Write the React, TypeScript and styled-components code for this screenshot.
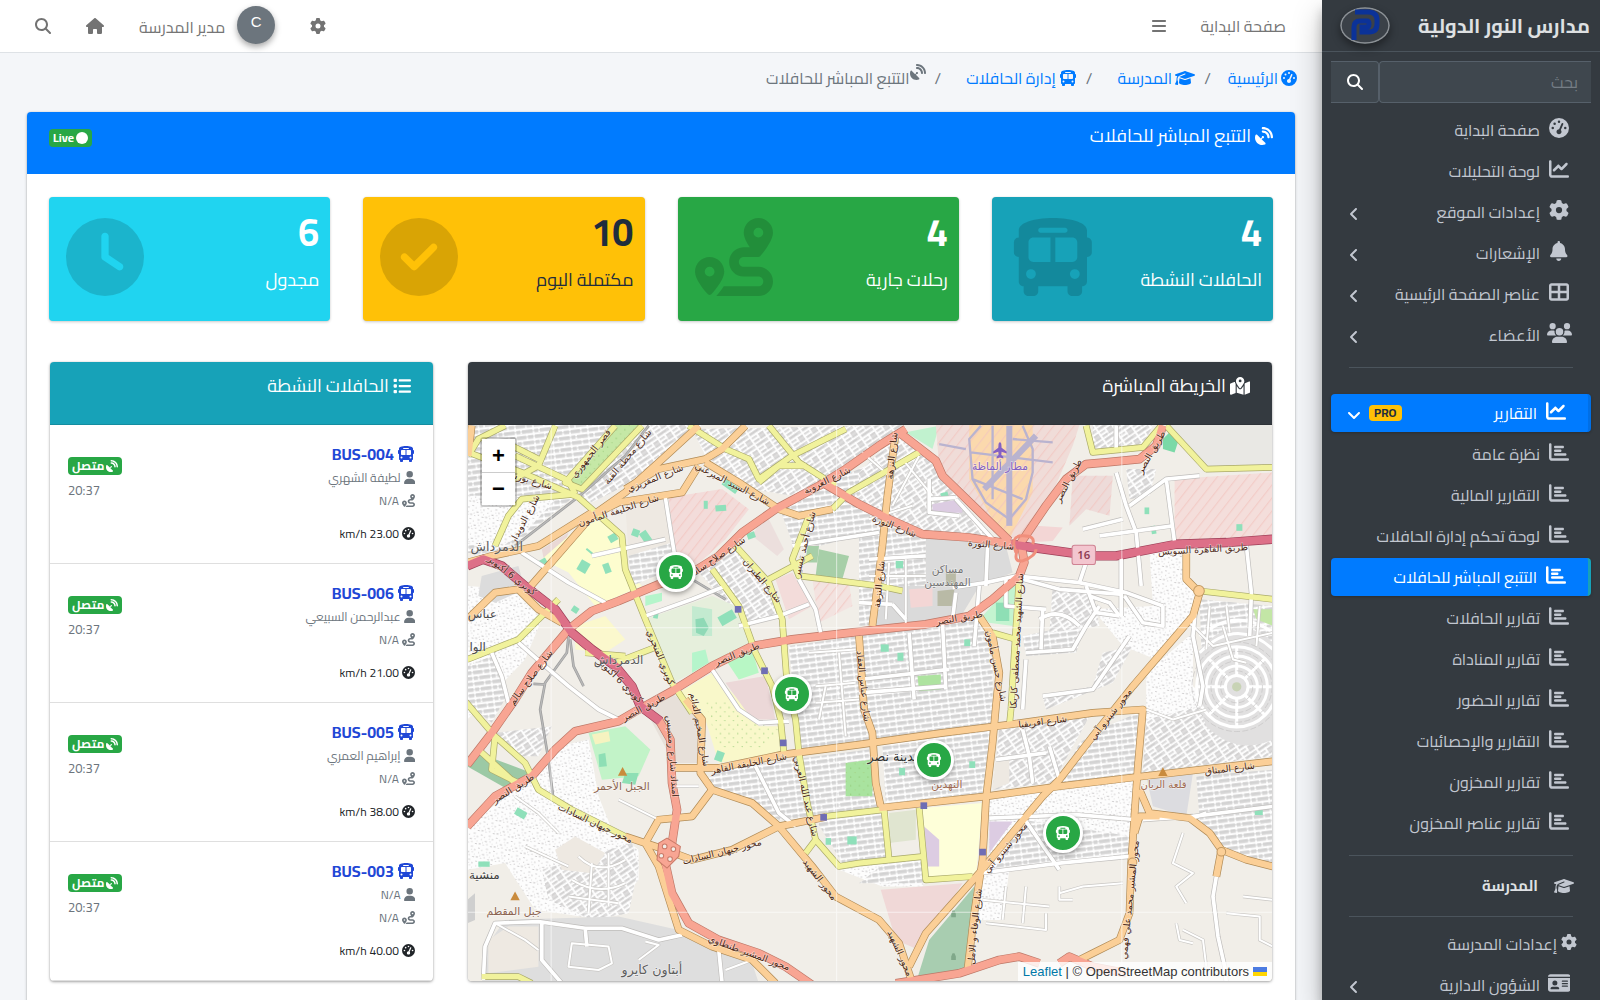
import React from "react";
import styled, { createGlobalStyle, css } from "styled-components";
import {
  FaAngleDown,
  FaAngleLeft,
  FaBars,
  FaBell,
  FaBus,
  FaChartBar,
  FaChartLine,
  FaCircle,
  FaCircleCheck,
  FaClock,
  FaGaugeHigh,
  FaGear,
  FaGraduationCap,
  FaHouse,
  FaIdCard,
  FaList,
  FaMagnifyingGlass,
  FaMapLocationDot,
  FaRoute,
  FaSatelliteDish,
  FaTableCellsLarge,
  FaUser,
  FaUsers,
} from "react-icons/fa6";

const colors = {
  primary: "#007bff",
  info: "#17a2b8",
  success: "#28a745",
  warning: "#ffc107",
  cyan: "#20d4f0",
  dark: "#343a40",
  muted: "#6c757d",
  sidebarText: "#c2c7d0",
};

const GlobalStyle = createGlobalStyle`
  *, *::before, *::after { box-sizing: border-box; }
  body {
    margin: 0;
    background: #f4f6f9;
    color: #212529;
    font-family: Cairo, "Open Sans", "DejaVu Sans", sans-serif;
    font-size: 16px;
    line-height: 24px;
  }
  a { color: inherit; text-decoration: none; }
  svg { flex-shrink: 0; }
  svg[viewBox="0 0 448 512"] { width: 0.875em; }
  svg[viewBox="0 0 576 512"] { width: 1.125em; }
  svg[viewBox="0 0 640 512"] { width: 1.25em; }
`;

const Shell = styled.div`
  display: flex;
  height: 100vh;
  overflow: hidden;
`;

/* ---------- Sidebar ---------- */

const Sidebar = styled.aside`
  flex: 0 0 278px;
  z-index: 2;
  overflow: hidden;
  background: ${colors.dark};
  color: ${colors.sidebarText};
  box-shadow: 0 14px 28px rgba(0, 0, 0, 0.25), 0 10px 10px rgba(0, 0, 0, 0.22);
`;

const Brand = styled.a`
  display: flex;
  align-items: center;
  justify-content: space-between;
  height: 52px;
  padding: 0 10px 0 18px;
  border-bottom: 1px solid #4b545c;
  color: #dee0e2;
  font-size: 20px;
  font-weight: 700;
`;

const BrandLogo = styled.svg`
  width: 50px;
  height: 37px;
  border-radius: 50%;
  box-shadow: 0 4px 8px rgba(0, 0, 0, 0.4);
`;

const SideSearch = styled.form`
  display: flex;
  height: 42px;
  margin: 9px 9px 8px;
`;

const SideInput = styled.input`
  flex: 1;
  min-width: 0;
  padding: 0 13px;
  border: 1px solid #56606a;
  border-right: 0;
  border-radius: 4px 0 0 4px;
  background: #3f474e;
  color: #fff;
  font: inherit;
  &::placeholder { color: #757d85; opacity: 1; }
`;

const SideSearchButton = styled.button`
  display: grid;
  place-items: center;
  width: 48px;
  border: 1px solid #56606a;
  border-left: 0;
  border-radius: 0 4px 4px 0;
  background: #3f474e;
  color: #fff;
  font-size: 16px;
`;

const NavList = styled.ul`
  display: grid;
  gap: 3px;
  margin: 0;
  padding: 0 9px;
  list-style: none;
`;

const NavLink = styled.a<{ $state?: "parent" | "current"; $tight?: boolean }>`
  display: flex;
  align-items: center;
  gap: ${(p) => (p.$tight ? 2 : 9)}px;
  height: 38px;
  padding: 0 ${(p) => (p.$tight ? 12 : 22)}px 0 17px;
  border-radius: 4px;
  white-space: nowrap;
  ${(p) =>
    p.$state &&
    css`
      background: ${colors.primary};
      border-right: 3px solid ${p.$state === "current" ? colors.info : "#006fe6"};
      color: #fff;
      box-shadow: 0 1px 3px rgba(0, 0, 0, 0.24);
    `}
`;

const NavIcon = styled.span<{ $size?: number }>`
  display: flex;
  justify-content: center;
  width: 20px;
  margin-bottom: 4px;
  font-size: ${(p) => p.$size ?? 20}px;
`;

const NavText = styled.span`
  flex: 1;
`;

const ProBadge = styled.span`
  padding: 0 5px;
  border-radius: 4px;
  background: ${colors.warning};
  color: #1f2d3d;
  font-size: 12px;
  font-weight: 700;
  line-height: 16px;
`;

const Chevron = styled.span`
  display: flex;
  justify-content: center;
  width: 12px;
  padding-top: 3px;
  font-size: 16px;
`;

const Divider = styled.hr<{ $above?: number; $below?: number }>`
  margin: ${(p) => p.$above ?? 13}px 27px ${(p) => p.$below ?? 0}px;
  border: 0;
  border-top: 1px solid #4b545c;
`;

const SideHeading = styled.div`
  display: flex;
  align-items: center;
  gap: 16px;
  height: 60px;
  padding: 0 26px;
  color: #dfe1e4;
  font-size: 15px;
  font-weight: 700;
  svg { color: ${colors.sidebarText}; font-size: 16px; }
`;

/* ---------- Top bar ---------- */

const Main = styled.main`
  flex: 1;
  min-width: 0;
  overflow-y: auto;
  scrollbar-width: none;
`;

const TopBar = styled.header`
  display: flex;
  align-items: center;
  height: 53px;
  padding: 0 36px 0 35px;
  border-bottom: 1px solid #dee2e6;
  background: #fff;
  color: #757575;
`;

const IconButton = styled.button`
  display: grid;
  place-items: center;
  padding: 0;
  border: 0;
  background: none;
  color: #737373;
  font-size: 16px;
`;

const TopStart = styled.div`
  display: flex;
  align-items: center;
  gap: 34px;
  flex: 1;
`;

const TopEnd = styled.div`
  display: flex;
  align-items: center;
  gap: 35px;
`;

const Profile = styled.a`
  display: flex;
  align-items: center;
  gap: 12px;
  padding-top: 2px;
`;

const Avatar = styled.span`
  width: 38px;
  height: 38px;
  margin-bottom: 4px;
  border-radius: 50%;
  background: ${colors.muted};
  box-shadow: 0 3px 6px rgba(0, 0, 0, 0.35);
  color: #fff;
  font-family: "Liberation Sans", Arial, sans-serif;
  font-size: 15px;
  line-height: 32px;
  text-align: center;
`;

/* ---------- Breadcrumb ---------- */

const Crumbs = styled.ol`
  display: flex;
  align-items: center;
  height: 24px;
  margin: 13px 25px 22px;
  padding: 0;
  color: ${colors.muted};
  list-style: none;
`;

const Crumb = styled.li`
  display: flex;
  align-items: center;
  white-space: nowrap;
  & + &::before {
    content: "/";
    padding: 0 25px 0 9px;
  }
  &:nth-child(2)::before {
    padding-right: 17px;
  }
`;

const CrumbLink = styled.a`
  display: flex;
  align-items: center;
  gap: 3px;
  color: ${colors.primary};
`;

const CrumbCurrent = styled.span`
  display: flex;
  align-items: center;
  svg { margin-bottom: 12px; }
`;

/* ---------- Cards ---------- */

const Panel = styled.section`
  margin: 0 27px;
  border-radius: 4px;
  background: #fff;
  box-shadow: 0 0 1px rgba(0, 0, 0, 0.2), 0 1px 3px rgba(0, 0, 0, 0.3);
`;

const PanelHeader = styled.header`
  display: flex;
  align-items: flex-start;
  justify-content: space-between;
  height: 62px;
  padding: 12px 22px;
  border-radius: 4px 4px 0 0;
  background: ${colors.primary};
  color: #fff;
`;

const Title = styled.h2`
  display: flex;
  align-items: center;
  gap: 4px;
  margin: 0;
  font-size: 18px;
  font-weight: 400;
  line-height: 24px;
`;

const GreenBadge = styled.span`
  display: inline-flex;
  align-items: center;
  gap: 2px;
  padding: 0 4px;
  border-radius: 4px;
  background: ${colors.success};
  color: #fff;
  font-size: 12px;
  font-weight: 700;
  line-height: 18px;
`;

const LiveBadge = styled(GreenBadge)`
  margin-top: 5px;
`;

const PanelBody = styled.div`
  padding: 23px 22px;
`;

const Stats = styled.div`
  display: grid;
  grid-template-columns: repeat(4, minmax(0, 1fr));
  gap: 33px;
  margin-bottom: 41px;
`;

const StatBox = styled.article<{ $bg: string; $fg?: string }>`
  display: flex;
  justify-content: space-between;
  height: 124px;
  padding: 10px 11px 10px 17px;
  border-radius: 4px;
  background: ${(p) => p.$bg};
  color: ${(p) => p.$fg ?? "#fff"};
  box-shadow: 0 0 1px rgba(0, 0, 0, 0.13), 0 1px 3px rgba(0, 0, 0, 0.2);
  > svg {
    margin-top: 11px;
    color: rgba(0, 0, 0, 0.15);
    font-size: 78px;
  }
`;

const StatValue = styled.h3`
  margin: 0 0 11px;
  font-size: 38px;
  font-weight: 700;
  line-height: 50px;
`;

const StatLabel = styled.p`
  margin: 0;
  font-size: 18px;
`;

const Columns = styled.div`
  display: grid;
  grid-template-columns: minmax(0, 21fr) minmax(0, 10fr);
  gap: 35px;
  padding: 0 1px;
`;

const Card = styled.section`
  overflow: hidden;
  border-radius: 4px;
  background: #fff;
  box-shadow: 0 0 1px rgba(0, 0, 0, 0.25), 0 1px 3px rgba(0, 0, 0, 0.35);
`;

const CardHeader = styled.header<{ $bg: string }>`
  height: 63px;
  padding: 12px 22px;
  border-bottom: 1px solid rgba(0, 0, 0, 0.13);
  background: ${(p) => p.$bg};
  color: #fff;
`;

const BusList = styled.ul`
  margin: 0;
  padding: 0;
  list-style: none;
`;

const BusItem = styled.li`
  display: flex;
  justify-content: space-between;
  height: 139px;
  padding: 17px 18px;
  border-bottom: 1px solid #dfdfdf;
`;

const BusName = styled.h4`
  display: flex;
  align-items: center;
  gap: 3px;
  margin: 0;
  color: #1f47d6;
  font-size: 16px;
  font-weight: 700;
  line-height: 24px;
`;

const BusLine = styled.p<{ $dark?: boolean }>`
  display: flex;
  align-items: center;
  gap: 3px;
  margin: 0;
  margin-top: ${(p) => (p.$dark ? 10 : 0)}px;
  color: ${(p) => (p.$dark ? "#212529" : colors.muted)};
  font-size: 12px;
  line-height: 23px;
  svg { font-size: 13px; }
`;

const BusStatus = styled.div`
  display: flex;
  flex-direction: column;
  align-items: flex-end;
  padding-top: 15px;
`;

const BusTime = styled.time`
  margin-top: 3px;
  color: ${colors.muted};
  font-size: 13px;
`;

/* ---------- Map ---------- */

const MapFrame = styled.div`
  position: relative;
  height: 556px;
  background: #f2efe9;
  direction: ltr;
`;

const MapCanvas = styled.svg`
  display: block;
  width: 100%;
  height: 100%;
`;

const ZoomControl = styled.div`
  position: absolute;
  top: 12px;
  left: 12px;
  display: grid;
  border: 2px solid rgba(0, 0, 0, 0.2);
  border-radius: 4px;
  background-clip: padding-box;
`;

const ZoomButton = styled.button`
  width: 33px;
  height: 33px;
  padding: 0;
  border: 0;
  background: #fff;
  color: #000;
  font: bold 22px/32px "Liberation Sans", Arial, sans-serif;
  & + & { border-top: 1px solid #ccc; }
`;

const Attribution = styled.div`
  position: absolute;
  right: 0;
  bottom: 0;
  display: flex;
  align-items: center;
  gap: 4px;
  padding: 0 5px;
  background: rgba(255, 255, 255, 0.8);
  color: #333;
  font: 13px/19px "Liberation Sans", Arial, sans-serif;
  a { color: #0078a8; }
`;

const Flag = styled.svg`
  width: 14px;
  height: 9px;
`;

const Marker = styled.span`
  position: absolute;
  display: grid;
  place-items: center;
  width: 40px;
  height: 40px;
  border: 3px solid #fff;
  border-radius: 50%;
  background: ${colors.success};
  box-shadow: 0 2px 5px rgba(0, 0, 0, 0.35);
  color: #fff;
  font-size: 14px;
  transform: translate(-50%, -50%);
`;

type RoadKind = "motorway" | "primary" | "secondary" | "tertiary" | "street" | "lane" | "rail";

const roadStyle: Record<RoadKind, [string, string, number]> = {
  motorway: ["#9c3f57", "#dd7088", 24],
  primary: ["#bd7767", "#f8a593", 22],
  secondary: ["#b08b57", "#fbcf97", 19],
  tertiary: ["#a9a96a", "#f1f29c", 16],
  street: ["#bfbdbb", "#ffffff", 11],
  lane: ["#c9c7c4", "#ffffff", 6],
  rail: ["#9b9b9b", "#b9b9b9", 4],
};

const roads: [RoadKind, string][] = [
  ["rail", "M330 650L325 700L260 790L245 870L270 1020L285 1140"],
  ["rail", "M335 660L345 740L375 800M225 793L260 795M700 480L800 540"],
  ["rail", "M570 20L500 110L370 225L170 380"],
  ["street", "M620 235L635 330L650 420M190 400L330 490L440 550M840 620L960 590L1050 555M1020 480L1070 570L1085 640"],
  ["street", "M560 590L700 540L800 500M400 410L620 360M1000 380L1260 340M760 750L840 870L900 910L990 905"],
  ["street", "M180 670L260 740L330 800L420 870L480 900M100 700L130 770L150 850"],
  ["street", "M1200 550L1300 555M1300 555L1340 600M1230 420L1400 410M1480 505L1580 490L1670 470L1860 490L2000 520L2110 560"],
  ["street", "M1690 480L1800 510L1990 525M1970 160L2000 260L2030 340L2045 500M1860 490L1880 430M2120 180L2145 370M2010 260L2120 180L2220 170"],
  ["street", "M1920 350L2140 320M1415 240L1490 235M1410 180L1410 280L1500 290M1490 240L1600 360M1585 380L1580 500M1490 520L1480 600"],
  ["street", "M1985 400L1985 540L1985 590M1995 530L2050 610L2110 620L2110 560M1880 500L1910 580L1980 590"],
  ["street", "M1200 780L1470 750M1200 820L1460 800M1350 640L1365 840M1450 610L1460 810M1640 480L1640 560L1760 570"],
  ["street", "M1700 700L1840 690L1880 620L1920 560M1700 720L1690 870M1750 830L1900 810L2010 650"],
  ["street", "M2210 540L2200 650L2230 800L2220 860M2360 380L2375 520L2370 650"],
  ["street", "M1560 1360L1800 1330L2010 1310M1590 1195L1850 1185L2030 1200M1690 1190L1800 1350"],
  ["street", "M2270 1370L2260 1430L2275 1550L2295 1640L2300 1690M2050 1200L2200 1190L2440 1160M2200 1195L2240 1180"],
  ["street", "M75 1680L80 1580L110 1510L240 1505L380 1525L490 1525L600 1560L670 1545M250 1505L250 1620L310 1690M380 1525L385 1580M780 1590L790 1690"],
  ["street", "M890 1040L960 1180L1010 1220M1610 1020L1760 1000M1770 980L1800 1080M1690 930L1710 1010L1720 1090"],
  ["street", "M1750 570L1745 690M1560 500L1545 680M1740 600Q1800 560 1860 620M1890 530L1950 550L1980 590M1970 20L1970 90M1990 300L1870 330"],
  ["lane", "M480 1140L600 1200M640 1100L720 1100M1070 800L1190 790M1100 800L1080 900M1050 700L1190 690M1070 850L1200 840M1140 700L1160 950"],
  ["lane", "M2290 620L2320 720L2360 730M2180 600L2260 680L2440 640M2060 870L2140 900L2240 870M2250 560L2240 690M2300 560L2310 640M2400 560L2390 680"],
  ["lane", "M2170 1240L2140 1330L2200 1360L2150 1400L2180 1450M2350 1430L2440 1440M2300 1480L2400 1490L2400 1560L2440 1580M2170 1530L2230 1560L2240 1640M2150 1510L2160 1560L2200 1570"],
  ["lane", "M1580 1510L1760 1530L1760 1480M1570 1440L1770 1460M1800 1420L1870 1400L1990 1390M1800 1400L1800 1440L1840 1440M1640 1400L1630 1500M1700 1400L1690 1510"],
  ["lane", "M340 1570L450 1580L460 1630L420 1650L330 1640ZM540 1620L600 1575L560 1565M800 1650L880 1620L940 1690M110 1510L200 1560L240 1590"],
  ["lane", "M360 1310Q420 1370 500 1320M340 1380Q420 1430 500 1390M330 1430L480 1450M400 1330L390 1480M450 1300L450 1460M170 1130L240 1180L300 1240M200 1280L330 1340"],
  ["lane", "M1290 430L1280 600M1340 420L1340 620M1230 470L1400 470M1230 300L1360 260M1330 120L1420 230M1380 110L1300 260M1210 100L1290 170"],
  ["tertiary", "M30 100L190 160L360 235L490 350L500 450L560 600L640 790L700 880"],
  ["tertiary", "M290 20L240 140L130 200M30 110L60 60L140 20M170 110L330 185L350 225M240 120L160 80M350 225L190 240L150 290L110 380"],
  ["tertiary", "M550 20L370 210L320 190L470 20"],
  ["tertiary", "M690 20L800 90L870 120L900 180L1000 110L1160 30M930 20L1020 130L1130 200M900 190L960 140L1040 140"],
  ["tertiary", "M830 380L930 490L970 600L985 800L1010 900L1020 1000L1045 1150L1070 1260L1140 1340L1200 1330L1395 1310"],
  ["tertiary", "M760 450L840 560L890 700L940 800L965 900L975 1000"],
  ["tertiary", "M930 480L1060 410M1050 290L1000 420L1020 470L1260 500L1330 515M1120 270L1170 220L1380 100M1100 1190L1275 1170"],
  ["tertiary", "M1680 470L1665 700L1655 870L1650 920M1880 20L1900 100L2050 85L2105 20M2120 20L2240 150L2440 145M2220 515L2440 540"],
  ["tertiary", "M20 845L110 950L200 1030L240 1110L340 1170L500 1250M110 950L100 1050L180 1090M60 990L170 1090M70 1670L180 1670L220 1690"],
  ["tertiary", "M1380 1165L1400 1380L1540 1370M1275 1170L1290 1320M1600 640L1670 660M27 720L180 660L300 540M1070 1260L1040 1300"],
  ["tertiary", "M470 730L600 680M380 700L500 710"],
  ["secondary", "M720 20L600 130L500 220L400 290L200 520"],
  ["secondary", "M400 280L240 380L100 410L27 430M500 210L600 150L740 120L790 90L860 20M740 130L840 190L960 270L1020 290L1120 270M720 140L670 220L480 250L400 290"],
  ["secondary", "M27 600L110 520L180 510L240 570L310 610M40 20L30 110"],
  ["secondary", "M1310 40L1285 230L1270 380L1240 620M1200 650L1215 870L1240 940L1250 1090L1265 1160"],
  ["secondary", "M1560 590L1600 650L1620 760L1610 860L1600 970L1580 1140L1570 1320L1545 1480L1525 1650"],
  ["secondary", "M640 1045L780 1045L970 1005L1200 975L1450 940L1650 915L1900 880L2050 870L2035 1040L2015 1330L2010 1480L1980 1560L1900 1600L1850 1625"],
  ["secondary", "M1260 1165L1580 1130L1800 1100L2050 1070L2440 1025M2105 20L2100 60"],
  ["secondary", "M1350 1640L1400 1540L1560 1360L1750 1130L1800 1080L1900 950L2020 800L2200 590L2220 520L2180 480L2180 400"],
  ["secondary", "M2040 1110L2070 1180L2190 1195L2250 1240L2285 1290L2360 1320L2440 1340M2285 1290L2270 1370M2025 1240L2040 1190L2100 1190"],
  ["secondary", "M680 840L730 900L725 1060L760 1110L880 1150L960 1220L1060 1340L1130 1430L1260 1500L1320 1570L1360 1690"],
  ["secondary", "M760 1110L700 1190L600 1200L560 1270L600 1340L660 1530L760 1580L880 1620L950 1690"],
  ["secondary", "M500 1250L620 1290L700 1320L820 1290L960 1220L1100 1192"],
  ["primary", "M600 900L635 960L640 1090L655 1170L640 1270L620 1330L640 1420L690 1510L780 1560L900 1600L980 1640L1060 1695"],
  ["primary", "M27 1035L100 940L170 840L220 760L330 630L400 575L480 545L600 495L700 460L780 410L850 340L950 270L1080 200L1160 150L1260 80L1340 30"],
  ["primary", "M27 1220L110 1130L220 1070L290 990L350 935L480 905L540 870L640 815L760 740L880 680L1000 660L1260 630L1400 615L1530 590L1600 540L1680 470L1695 430L1685 370L1760 260L1820 180L1880 135L1940 130L2040 120L2090 80L2110 20"],
  ["primary", "M1090 190L1200 255L1290 300L1390 345L1530 355L1660 375M1320 40L1430 125L1450 170L1650 365"],
  ["primary", "M1310 1690L1500 1660L1620 1620L1680 1610L1740 1630M1800 1630L1830 1610L1900 1640L2000 1660"],
  ["motorway", "M27 440L75 420L130 440L200 500L290 570L340 640L400 690L470 740L520 800L545 860L605 905"],
  ["motorway", "M1655 375L1720 385L1900 410L1970 410L2150 375L2300 370L2440 360"],
];

type Area = [fill: string, points: string];

const areas: Area[] = [
  ["url(#streetsA)", "27,18 300,18 470,18 330,190 350,230 200,350 100,410 27,400"],
  ["url(#dots)", "27,230 300,230 200,340 100,400 27,370"],
  ["url(#dots)", "27,500 160,510 250,600 200,720 27,900"],
  ["url(#streetsB)", "570,18 730,18 600,130 480,210 400,250 350,230"],
  ["url(#streetsB)", "700,30 1330,18 1200,130 1000,230 880,210 740,110"],
  ["url(#streetsA)", "960,260 1330,90 1280,330 1080,380 1000,370"],
  ["#dcdcdc", "70,470 180,440 200,510 110,550 60,530"],
  ["#ead9d6", "250,390 330,340 300,430 260,440"],
  ["#c5e8a6", "470,18 550,18 370,210 320,190"],
  ["url(#trees)", "470,18 550,18 370,210 320,190"],
  ["#fdfdcf", "400,290 490,350 500,450 550,500 410,560 330,460 250,420"],
  ["#fbf8cd", "350,620 440,590 500,660 440,700 350,690"],
  ["#eee9e2", "500,250 620,235 640,370 510,410"],
  ["#f3dcda", "630,235 790,210 870,270 800,360 700,450 650,430"],
  ["url(#hatch)", "630,235 790,210 870,270 800,360 700,450 650,430"],
  ["#ecdfdd", "920,280 975,390 955,410 880,350"],
  ["url(#streetsA)", "510,410 640,370 660,440 520,500"],
  ["url(#streetsB)", "720,460 830,390 930,490 960,590 860,610"],
  ["#e6efdc", "560,600 760,530 830,560 880,680 640,790"],
  ["#c3ead0", "700,560 760,570 760,650 700,650"],
  ["#8fd9b6", "710,600 735,595 750,625 735,650 712,640"],
  ["#b8f7c5", "800,720 880,690 900,760 840,780"],
  ["#b5f5cb", "560,530 610,520 610,545 560,560"],
  ["#b5f5cb", "700,700 740,690 750,730 700,760"],
  ["#f3dcda", "950,480 1000,460 1060,560 990,600"],
  ["#f3e3e0", "1060,480 1170,490 1180,560 1080,610"],
  ["url(#hatch)", "1060,480 1170,490 1180,560 1080,610"],
  ["#a7cfa8", "1080,390 1170,410 1150,480 1070,470"],
  ["#a7cfa8", "1045,380 1080,380 1075,430 1040,430"],
  ["url(#streetsA)", "990,680 1200,650 1215,870 1240,970 1020,1000"],
  ["#f9f8ca", "660,820 760,760 860,860 900,920 960,920 970,1000 780,1030 740,900"],
  ["url(#trees)", "740,850 800,840 860,900 960,930 900,990 780,990"],
  ["#ecd8d8", "800,790 920,770 950,900 880,900"],
  ["#e7e0d9", "560,870 640,820 730,900 720,1030 645,1030"],
  ["#c2f3c8", "390,940 500,920 575,990 540,1070 430,1080"],
  ["#8edfb5", "420,1005 440,1000 445,1040 422,1042"],
  ["#8edfb5", "500,1060 540,1060 530,1095 490,1090"],
  ["#f6f3c0", "400,945 450,935 455,965 410,975"],
  ["#9cc9a5", "27,1040 60,1000 220,1060 150,1110"],
  ["url(#streetsB)", "110,940 280,920 240,1010 160,1010"],
  ["url(#streetsA)", "27,740 100,710 150,820 100,910 27,850"],
  ["url(#dots)", "220,1070 300,980 390,960 420,1130 460,1230 540,1290 540,1380 440,1500 230,1470 140,1330 27,1350 27,1220"],
  ["url(#streetsB)", "250,1350 520,1270 540,1340 510,1480 400,1500 270,1440"],
  ["#eee9e2", "290,1290 350,1250 440,1300 400,1360 310,1350"],
  ["#dedede", "70,1690 90,1570 140,1500 480,1490 660,1530 760,1590 880,1630 900,1690"],
  ["#eee9e2", "90,1560 150,1520 240,1520 240,1640 90,1660"],
  ["#cfcfcf", "27,1440 50,1420 50,1500 27,1510"],
  ["url(#streetsA)", "770,1050 1230,990 1260,1160 1070,1190 960,1200 860,1140 740,1090"],
  ["#a9e39f", "1160,1030 1240,1020 1240,1130 1160,1130"],
  ["url(#trees)", "1160,1030 1240,1020 1240,1130 1160,1130"],
  ["url(#streetsA)", "1070,1200 1280,1175 1290,1320 1150,1330"],
  ["url(#dots)", "1140,1350 1290,1330 1400,1380 1390,1400 1270,1400"],
  ["url(#streetsB)", "1200,160 1310,50 1400,110 1500,240 1600,350 1400,340 1200,250"],
  ["#dbdbdb", "1400,350 1640,380 1660,460 1540,510 1400,500"],
  ["url(#streetsA)", "1200,300 1400,350 1400,600 1200,620"],
  ["url(#streetsA)", "1200,650 1560,600 1600,700 1600,960 1240,980"],
  ["#dadada", "1290,500 1560,500 1500,600 1240,620"],
  ["#f3d6d5", "1350,510 1420,505 1420,560 1355,565"],
  ["#b9baa6", "1435,515 1485,510 1485,560 1435,560"],
  ["#b9baa6", "1460,460 1490,460 1490,500 1460,500"],
  ["#c1f2cf", "1340,40 1440,20 1420,90"],
  ["#f0dcd8", "1430,18 1860,18 1840,80 1780,220 1680,360 1640,350 1440,140"],
  ["#fbd9ad", "1530,18 1720,18 1720,220 1650,360 1600,300 1530,180"],
  ["url(#hatch)", "1430,18 1860,18 1840,80 1780,220 1680,360 1640,350 1440,140"],
  ["#eedbd9", "1840,170 1960,170 1950,290 1880,270 1830,320"],
  ["url(#hatch)", "1840,170 1960,170 1950,290 1880,270 1830,320"],
  ["#f3d6d5", "1730,320 1810,325 1780,365 1700,370"],
  ["#dccce2", "1420,255 1500,240 1510,280 1420,285"],
  ["url(#streetsB)", "1900,18 2080,18 2050,80 1900,90"],
  ["url(#streetsB)", "2000,150 2090,150 2070,230 2010,240"],
  ["#e9e8e4", "2130,18 2440,18 2440,140 2240,145"],
  ["#f4dedb", "2145,180 2440,160 2440,350 2145,370"],
  ["url(#hatch)", "2145,180 2440,160 2440,350 2145,370"],
  ["#7bd9a7", "2110,60 2130,40 2155,70 2145,100 2110,90"],
  ["#c4f4d0", "1570,590 1670,480 1660,620 1590,610"],
  ["#8edfb5", "1610,550 1650,550 1650,605 1610,605"],
  ["#aee3a0", "1375,770 1445,765 1445,810 1380,815"],
  ["url(#streetsA)", "1690,650 1880,610 1850,700 1700,710"],
  ["url(#streetsB)", "1780,500 1900,510 1920,620 1770,640"],
  ["url(#dots)", "2070,400 2180,410 2210,540 2190,600 2090,720 1990,680 1900,570 2080,560"],
  ["url(#dots)", "2060,760 2200,640 2200,800 2320,900 2240,990 2060,900"],
  ["url(#streetsB)", "1930,700 2020,680 1960,790 1760,870 1750,830 1900,800"],
  ["url(#streetsA)", "2220,540 2440,560 2440,820 2230,830"],
  ["url(#streetsB)", "2060,900 2220,860 2440,880 2440,1010 2050,1060"],
  ["#dcdce0", "2060,1070 2200,1060 2180,1190 2080,1160"],
  ["url(#streetsA)", "2210,1070 2440,1050 2440,1330 2300,1300 2220,1200"],
  ["url(#streetsB)", "1620,930 1890,890 1780,1090 1600,1110"],
  ["#eee9e2", "1610,1010 1650,1010 1650,1090 1600,1110"],
  ["url(#streetsA)", "1860,970 1920,930 2035,880 2030,1060 1800,1090"],
  ["url(#streetsA)", "1270,980 1590,960 1570,1120 1280,1150"],
  ["url(#dots)", "1590,1140 2040,1080 2020,1310 1590,1350"],
  ["url(#streetsA)", "1690,1200 2020,1250 2010,1310 1600,1360"],
  ["#dccce2", "1590,1205 1660,1205 1590,1300"],
  ["#feffd9", "1390,1165 1570,1150 1550,1370 1410,1370"],
  ["#dccce2", "1395,1220 1440,1260 1440,1340 1405,1340"],
  ["url(#streetsA)", "1290,1320 1395,1310 1400,1390 1200,1390"],
  ["#e0e5d0", "1290,1180 1370,1170 1370,1260 1290,1270"],
  ["#f0d8d7", "1265,1410 1510,1390 1380,1590 1310,1560"],
  ["#a8cdb0", "1545,1400 1525,1660 1370,1690 1410,1560"],
  ["url(#dots)", "1560,1360 1650,1350 1630,1500 1560,1500"],
  ["#c3e6a6", "2380,570 2440,570 2440,620 2390,600"],
];

const smallGreens = [
  [360, 425, 30, 34, 30], [450, 345, 26, 22, -30], [435, 432, 20, 30, -20], [550, 335, 24, 40, -35],
  [735, 245, 12, 24, 0], [770, 258, 32, 18, -5], [865, 340, 24, 18, -20], [340, 562, 20, 18, 35],
  [585, 575, 14, 22, 10], [790, 570, 30, 50, 60], [1445, 220, 22, 16, -15], [2055, 265, 14, 20, 0],
  [2075, 320, 14, 24, -10], [2330, 315, 18, 20, 0], [170, 1170, 34, 22, 30], [60, 1325, 34, 16, 0],
  [1265, 675, 24, 22, 0], [1315, 700, 18, 24, 0], [1310, 425, 22, 22, 0], [1320, 1045, 18, 22, 0],
  [1530, 1025, 18, 20, 0], [1100, 1255, 16, 20, 0], [1165, 1250, 28, 24, 0], [770, 995, 24, 30, 20],
  [1515, 660, 18, 20, 0], [2385, 1170, 24, 16, 0], [240, 420, 26, 20, -30], [790, 190, 50, 22, 35],
  [520, 330, 22, 22, 20], [380, 395, 30, 6, 40],
];

type Label = [text: string, x: number, y: number, angle: number, size?: number, color?: string];

const labels: Label[] = [
  ["قصر الجمهوري", 398, 104, -52],
  ["شارع محطة القبة", 508, 114, -50],
  ["شارع المقريزي", 590, 178, -22],
  ["شارع السيد الميرغني", 820, 195, 27],
  ["شارع العروبة", 1105, 185, -26],
  ["شارع الخليفة المأمون", 480, 275, -18],
  ["شارع الدويدار", 200, 300, -62],
  ["شارع بورسعيد", 200, 180, 16],
  ["كوبري 6 أكتوبر", 160, 470, 38],
  ["شارع صلاح سالم", 218, 775, -53],
  ["شارع صلاح سالم", 775, 415, -34],
  ["شارع الطيران", 910, 485, 50],
  ["شارع أحمد تيسير", 1038, 375, -76],
  ["طريق النصر", 835, 705, -22],
  ["كوبري الفنجري", 605, 715, 68],
  ["كوبري 6 أكتوبر", 485, 785, 45],
  ["طريق النصر", 165, 1108, -32],
  ["طريق النصر", 555, 865, -28],
  ["محور جيهان السادات", 410, 1212, 25],
  ["محور جيهان السادات", 790, 1297, -14],
  ["امتداد شارع رمسيس", 640, 1010, 86],
  ["شارع الخليفة القاهر", 870, 1033, -11],
  ["شارع المخيم الدائم", 722, 930, 80],
  ["شارع عبد الله العربي", 1040, 1130, 77],
  ["محور المشير طنطاوي", 870, 1600, 20],
  ["محور الشهيد", 1082, 1380, 52],
  ["محور الشهيد", 1322, 1600, 66],
  ["طريق النصر", 1828, 185, -62],
  ["طريق النصر", 2076, 100, -60],
  ["شارع النزهة", 1300, 110, -84],
  ["شارع الثورة", 1305, 322, 21],
  ["شارع الثورة", 1595, 378, 5],
  ["طريق القاهرة السويس", 2230, 392, -3],
  ["شارع النزهة", 1262, 495, -84],
  ["طريق النصر", 1500, 597, -10],
  ["شارع حسن مأمون", 1610, 740, 78],
  ["شارع الشهيد محمد مصطفى كاريكا", 1674, 665, -87],
  ["شارع عباس العقاد", 1212, 800, 84],
  ["شارع افريقيا", 1750, 908, -7],
  ["محور شينزو آبي", 1955, 885, -52],
  ["محور شينزو آبي", 1640, 1285, -50],
  ["شارع الميثاق", 2310, 1048, -7],
  ["شارع الوفاء و الامل", 1548, 1520, -84],
  ["محور المشير محمد علي فهمي", 2012, 1440, -84],
  ["الدمرداش", 115, 395, 0, 38, "#5c5c5c"],
  ["عباس", 72, 595, 0, 36, "#4c4c4c"],
  ["الوا", 58, 695, 0, 36, "#4c4c4c"],
  ["الدمرداش", 480, 734, 0, 36, "#5c5c5c"],
  ["منشية", 78, 1377, 0, 36, "#3c3c3c"],
  ["أبتاون كايرو", 580, 1662, 0, 38, "#5c5c5c"],
  ["مساكن", 1465, 462, 0, 32, "#757575"],
  ["المهندسين", 1465, 500, 0, 32, "#757575"],
  ["مدينة نصر", 1305, 1024, 0, 38, "#333"],
  ["النهدين", 1463, 1104, 0, 32, "#a06a50"],
  ["الجبل الأحمر", 490, 1112, 0, 32, "#8c6450"],
  ["جبل المقطم", 167, 1485, 0, 32, "#8c6450"],
  ["قلعة الريان", 2112, 1104, 0, 30, "#a06a50"],
  ["مطار ألماظة", 1622, 153, 0, 32, "#8461c4"],
];

const peaks = ["M492 1042l14 26h-28z", "M170 1415l14 26h-28z", "M2110 1043l14 26h-28z"];
const metroStops = [[828, 560], [907, 744], [963, 960], [1084, 1183], [1384, 1148], [1560, 1287]];

const CairoMap = () => (
  <MapCanvas viewBox="27 18 2412 1665" preserveAspectRatio="xMidYMid slice" role="img" aria-label="الخريطة المباشرة">
    <defs>
      <pattern id="streetsA" width="54" height="34" patternUnits="userSpaceOnUse" patternTransform="rotate(-7)">
        <rect width="54" height="34" fill="#dcdbdb" />
        <path d="M0 3H54M0 20H54M3 0V34M36 0V20M20 20V34" stroke="#fff" strokeWidth="5" />
        <path d="M0 11H54M0 28H54" stroke="#c4c3c3" strokeWidth="2" />
      </pattern>
      <pattern id="streetsB" width="46" height="38" patternUnits="userSpaceOnUse" patternTransform="rotate(-34)">
        <rect width="46" height="38" fill="#dddcdc" />
        <path d="M0 3H46M0 15H26M0 27H46M3 0V38M26 0V27" stroke="#fff" strokeWidth="5" />
        <path d="M10 21H46M8 34H36M30 9H46" stroke="#c4c3c3" strokeWidth="2" />
      </pattern>
      <pattern id="dots" width="46" height="40" patternUnits="userSpaceOnUse" patternTransform="rotate(12)">
        <rect width="46" height="40" fill="#fdfdfd" />
        <path
          d="M3 4h5M14 9h3M27 3h6M38 11h4M6 18h3M19 21h6M33 19h3M2 31h6M15 33h3M25 29h4M37 33h6M12 26h2M30 12h2M41 25h2"
          stroke="#cdcbcc"
          strokeWidth="3"
        />
      </pattern>
      <pattern id="hatch" width="24" height="24" patternUnits="userSpaceOnUse" patternTransform="rotate(38)">
        <path d="M2 0V24" stroke="#f2c4bf" strokeWidth="2.5" />
      </pattern>
      <pattern id="trees" width="26" height="26" patternUnits="userSpaceOnUse">
        <circle cx="5" cy="6" r="2" fill="#8cc46e" />
        <circle cx="18" cy="19" r="2" fill="#a3d084" />
      </pattern>
    </defs>
    <rect x="27" y="18" width="2412" height="1665" fill="#f1eee8" />
    {areas.map(([fill, points], i) => (
      <polygon key={i} points={points} fill={fill} />
    ))}
    {smallGreens.map(([x, y, w, h, a], i) => (
      <rect key={i} x={x} y={y} width={w} height={h} fill="#8fe0ba" transform={`rotate(${a} ${x + w / 2} ${y + h / 2})`} />
    ))}
    <g fill="none" stroke="#b9b3cf">
      <path d="M1650 20V320" strokeWidth="18" />
      <path d="M1575 210L1730 50" strokeWidth="18" />
      <path d="M1565 20L1530 60L1540 180L1580 250L1650 300L1700 240L1720 160L1720 90L1690 20M1535 100L1780 130M1440 75L1520 90M1540 180L1690 240M1660 60L1780 70M1600 20L1600 240" strokeWidth="7" />
    </g>
    <path d="M2220 690Q2330 570 2440 670V960Q2330 1010 2240 920Q2190 800 2220 690Z" fill="#e1e0e0" />
    <g fill="none" stroke="#fff" strokeWidth="9">
      {[34, 62, 92, 120].map((r) => (
        <circle key={r} cx="2331" cy="802" r={r} />
      ))}
      <path d="M2331 682V768M2331 836V922M2211 802H2297M2365 802H2440M2246 717L2307 778M2355 826L2416 887M2416 717L2355 778M2307 826L2246 887" />
      <path d="M2220 700Q2330 590 2440 690M2220 650Q2330 560 2440 640" />
    </g>
    <g fill="none" stroke="#c4c3c3" strokeWidth="2">
      {[48, 77, 106, 134].map((r) => (
        <circle key={r} cx="2331" cy="802" r={r} strokeDasharray="18 7" />
      ))}
    </g>
    <circle cx="2331" cy="802" r="14" fill="#c8d3b5" />
    {roads.map(([kind, d], i) => (
      <path key={i} d={d} fill="none" stroke={roadStyle[kind][0]} strokeWidth={roadStyle[kind][2] + 4} strokeLinejoin="round" />
    ))}
    {roads.map(([kind, d], i) => (
      <path key={i} d={d} fill="none" stroke={roadStyle[kind][1]} strokeWidth={roadStyle[kind][2]} strokeLinejoin="round" />
    ))}
    <g fill="#f8a593" stroke="#c97a68" strokeWidth="3">
      <path d="M600 1270L625 1255L665 1280L660 1310L625 1345L595 1320Z" />
      <g fill="#f1eee8">
        <circle cx="618" cy="1280" r="7" />
        <circle cx="644" cy="1288" r="7" />
        <circle cx="608" cy="1308" r="7" />
        <circle cx="634" cy="1318" r="7" />
      </g>
    </g>
    <g fill="none" stroke="#f08f7c" strokeWidth="9">
      <path d="M1670 400Q1650 350 1690 350Q1730 350 1720 375M1675 390Q1660 430 1690 425Q1730 410 1730 390" />
    </g>
    <g fill="#fbcf97" stroke="#c39a63" strokeWidth="3">
      <circle cx="2218" cy="515" r="16" />
      <circle cx="2285" cy="1296" r="13" />
      <circle cx="2019" cy="1328" r="13" />
    </g>
    <g fill="#6f6db4">
      {metroStops.map(([x, y]) => (
        <rect key={x} x={x} y={y} width="20" height="20" />
      ))}
    </g>
    <g fill="#c98b3d">
      {peaks.map((d) => (
        <path key={d} d={d} />
      ))}
    </g>
    <path
      d="M1618 74q4-8 8 0l1 12 15 11v6l-15-5-1 10 6 5v5l-10-3-10 3v-5l6-5-1-10-15 5v-6l15-11z"
      fill="#8461c4"
    />
    <path d="M1476 1492h14v-10l-4-10h-6l-4 10zM1476 1620h14v-10l-4-10h-6l-4 10z" fill="#80a88a" />
    <rect x="1838" y="378" width="70" height="58" rx="8" fill="#f3c6cf" stroke="#cf8393" strokeWidth="3" />
    <text x="1873" y="419" textAnchor="middle" fontFamily='"Noto Sans", sans-serif' fontSize="34" fontWeight="600" fill="#8f3f55">
      16
    </text>
    <path d="M278 18V1683M1133 18V1683M1987 18V1683M27 625H2440M27 1477H2440" stroke="#fff" strokeOpacity="0.6" strokeWidth="3" />
    <g fontFamily='"DejaVu Sans", sans-serif' textAnchor="middle" paintOrder="stroke" stroke="#fff" strokeOpacity="0.45" strokeWidth="4" direction="rtl">
      {labels.map(([text, x, y, angle, size = 28, color = "#4a2815"], i) => (
        <text key={i} x={x} y={angle ? y + 8 : y} fontSize={size} fill={color} transform={`rotate(${angle} ${x} ${y})`}>
          {text}
        </text>
      ))}
    </g>
  </MapCanvas>
);

/* ---------- Data ---------- */

const siteLinks = [
  { text: "صفحة البداية", icon: <FaGaugeHigh /> },
  { text: "لوحة التحليلات", icon: <FaChartLine /> },
  { text: "إعدادات الموقع", icon: <FaGear />, more: true },
  { text: "الإشعارات", icon: <FaBell />, more: true },
  { text: "عناصر الصفحة الرئيسية", icon: <FaTableCellsLarge />, more: true },
  { text: "الأعضاء", icon: <FaUsers />, more: true },
];

const reportLinks = [
  "نظرة عامة",
  "التقارير المالية",
  "لوحة تحكم إدارة الحافلات",
  "التتبع المباشر للحافلات",
  "تقارير الحافلات",
  "تقارير المناداة",
  "تقارير الحضور",
  "التقارير والإحصائيات",
  "تقارير المخزون",
  "تقارير عناصر المخزون",
];

const stats = [
  { value: 4, label: "الحافلات النشطة", bg: colors.info, icon: <FaBus /> },
  { value: 4, label: "رحلات جارية", bg: colors.success, icon: <FaRoute /> },
  { value: 10, label: "مكتملة اليوم", bg: colors.warning, fg: "#1f2d3d", icon: <FaCircleCheck /> },
  { value: 6, label: "مجدول", bg: colors.cyan, icon: <FaClock /> },
];

const buses = [
  { name: "BUS-004", driver: "لطيفة الشهري", speed: "23.00", x: 25.9, y: 26.5 },
  { name: "BUS-006", driver: "عبدالرحمن السبيعي", speed: "21.00", x: 40.3, y: 48.3 },
  { name: "BUS-005", driver: "إبراهيم العمري", speed: "38.00", x: 58, y: 60.2 },
  { name: "BUS-003", driver: "N/A", speed: "40.00", x: 74, y: 73.4 },
];

export default function App() {
  return (
    <Shell dir="rtl" lang="ar">
      <GlobalStyle />
      <Sidebar>
        <Brand href="#">
          مدارس النور الدولية
          <BrandLogo viewBox="0 0 50 37" aria-hidden="true">
            <ellipse cx="25" cy="18.5" rx="24" ry="17.5" fill="#3b4148" stroke="#8b9095" strokeWidth="1.5" />
            <path
              d="M14 33V20Q14 14 20 14H27Q29 14 29 17T27 20H22V25H29Q37 25 37 17V13Q37 5 28 5H15"
              fill="none"
              stroke="#0b3298"
              strokeWidth="5"
            />
          </BrandLogo>
        </Brand>
        <SideSearch role="search" onSubmit={(e) => e.preventDefault()}>
          <SideInput type="search" placeholder="بحث" aria-label="بحث" />
          <SideSearchButton type="submit" aria-label="بحث">
            <FaMagnifyingGlass />
          </SideSearchButton>
        </SideSearch>
        <nav>
          <NavList>
            {siteLinks.map((l) => (
              <li key={l.text}>
                <NavLink href="#">
                  <NavIcon>{l.icon}</NavIcon>
                  <NavText>{l.text}</NavText>
                  {l.more && <Chevron><FaAngleLeft /></Chevron>}
                </NavLink>
              </li>
            ))}
          </NavList>
          <Divider $below={26} />
          <NavList>
            <li>
              <NavLink href="#" $state="parent">
                <NavIcon><FaChartLine /></NavIcon>
                <NavText>التقارير</NavText>
                <ProBadge>PRO</ProBadge>
                <Chevron><FaAngleDown /></Chevron>
              </NavLink>
            </li>
            {reportLinks.map((text, i) => (
              <li key={text}>
                <NavLink href="#" $state={i === 3 ? "current" : undefined}>
                  <NavIcon><FaChartBar /></NavIcon>
                  <NavText>{text}</NavText>
                </NavLink>
              </li>
            ))}
          </NavList>
          <Divider />
          <SideHeading>
            <FaGraduationCap />
            المدرسة
          </SideHeading>
          <Divider $above={0} $below={8} />
          <NavList>
            <li>
              <NavLink href="#" $tight>
                <NavIcon $size={16}><FaGear /></NavIcon>
                <NavText>إعدادات المدرسة</NavText>
              </NavLink>
            </li>
            <li>
              <NavLink href="#">
                <NavIcon><FaIdCard /></NavIcon>
                <NavText>الشؤون الادارية</NavText>
                <Chevron><FaAngleLeft /></Chevron>
              </NavLink>
            </li>
          </NavList>
        </nav>
      </Sidebar>

      <Main>
        <TopBar>
          <TopStart>
            <a href="#">صفحة البداية</a>
            <IconButton type="button" aria-label="القائمة"><FaBars /></IconButton>
          </TopStart>
          <TopEnd>
            <IconButton type="button" aria-label="الإعدادات"><FaGear /></IconButton>
            <Profile href="#">
              <Avatar>C</Avatar>
              مدير المدرسة
            </Profile>
            <IconButton type="button" aria-label="الرئيسية"><FaHouse /></IconButton>
            <IconButton type="button" aria-label="بحث"><FaMagnifyingGlass /></IconButton>
          </TopEnd>
        </TopBar>

        <nav>
          <Crumbs>
            <Crumb><CrumbLink href="#"><FaGaugeHigh />الرئيسية</CrumbLink></Crumb>
            <Crumb><CrumbLink href="#"><FaGraduationCap />المدرسة</CrumbLink></Crumb>
            <Crumb><CrumbLink href="#"><FaBus />إدارة الحافلات</CrumbLink></Crumb>
            <Crumb><CrumbCurrent><FaSatelliteDish />التتبع المباشر للحافلات</CrumbCurrent></Crumb>
          </Crumbs>
        </nav>

        <Panel>
          <PanelHeader>
            <Title><FaSatelliteDish />التتبع المباشر للحافلات</Title>
            <LiveBadge><FaCircle />Live</LiveBadge>
          </PanelHeader>
          <PanelBody>
            <Stats>
              {stats.map((s) => (
                <StatBox key={s.label} $bg={s.bg} $fg={s.fg}>
                  <div>
                    <StatValue>{s.value}</StatValue>
                    <StatLabel>{s.label}</StatLabel>
                  </div>
                  {s.icon}
                </StatBox>
              ))}
            </Stats>
            <Columns>
              <Card>
                <CardHeader $bg={colors.dark}>
                  <Title><FaMapLocationDot />الخريطة المباشرة</Title>
                </CardHeader>
                <MapFrame>
                  <CairoMap />
                  {buses.map((b) => (
                    <Marker key={b.name} title={b.name} style={{ left: `${b.x}%`, top: `${b.y}%` }}>
                      <FaBus />
                    </Marker>
                  ))}
                  <ZoomControl>
                    <ZoomButton type="button" aria-label="تكبير">+</ZoomButton>
                    <ZoomButton type="button" aria-label="تصغير">−</ZoomButton>
                  </ZoomControl>
                  <Attribution>
                    <span><a href="#">Leaflet</a> | © OpenStreetMap contributors</span>
                    <Flag viewBox="0 0 14 9" aria-hidden="true">
                      <path d="M0 0H14V5H0z" fill="#4c7be1" />
                      <path d="M0 5H14V9H0z" fill="#ffd500" />
                    </Flag>
                  </Attribution>
                </MapFrame>
              </Card>
              <Card>
                <CardHeader $bg={colors.info}>
                  <Title><FaList />الحافلات النشطة</Title>
                </CardHeader>
                <BusList>
                  {buses.map((b) => (
                    <BusItem key={b.name}>
                      <div>
                        <BusName><FaBus />{b.name}</BusName>
                        <BusLine><FaUser />{b.driver}</BusLine>
                        <BusLine><FaRoute />N/A</BusLine>
                        <BusLine $dark><FaGaugeHigh />{b.speed} km/h</BusLine>
                      </div>
                      <BusStatus>
                        <GreenBadge><FaSatelliteDish />متصل</GreenBadge>
                        <BusTime>20:37</BusTime>
                      </BusStatus>
                    </BusItem>
                  ))}
                </BusList>
              </Card>
            </Columns>
          </PanelBody>
        </Panel>
      </Main>
    </Shell>
  );
}
